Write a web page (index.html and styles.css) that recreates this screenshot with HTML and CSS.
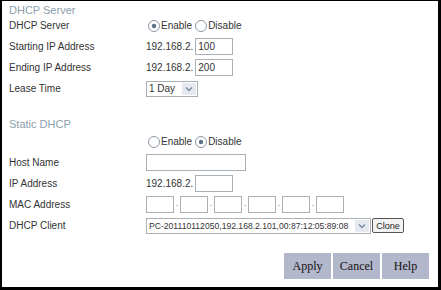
FILE: index.html
```html
<!DOCTYPE html>
<html lang="en">
  <head>
    <meta charset="UTF-8" />
    <title>DHCP Settings</title>
    <link rel="stylesheet" href="styles.css">
  </head>
  <body>
    <div class="frame">
      <h2 class="section-title">DHCP Server</h2>
      <div class="section">
        <div class="row">
          <span class="label">DHCP Server</span>
          <span class="value">
            <svg class="radio" viewBox="0 0 12 12"><circle cx="6" cy="6" r="5.5" fill="#fff" stroke="#8d99a6"/><circle cx="6" cy="6" r="2.2" fill="#5d7088"/></svg>
            <span class="opt">Enable</span>
            <svg class="radio" viewBox="0 0 12 12"><circle cx="6" cy="6" r="5.5" fill="#fff" stroke="#8d99a6"/></svg>
            <span class="opt">Disable</span>
          </span>
        </div>
        <div class="row">
          <span class="label">Starting IP Address</span>
          <span class="value"><span class="prefix">192.168.2.</span><input class="ip" type="text" value="100"></span>
        </div>
        <div class="row">
          <span class="label">Ending IP Address</span>
          <span class="value"><span class="prefix">192.168.2.</span><input class="ip" type="text" value="200"></span>
        </div>
        <div class="row">
          <span class="label">Lease Time</span>
          <span class="value">
            <span class="select lease">
              <span class="select-text">1 Day</span>
              <span class="arrow"><svg viewBox="0 0 8 6" width="8" height="6"><path d="M1 1.5 L4 4.5 L7 1.5" fill="none" stroke="#7b8aa6" stroke-width="1.5"/></svg></span>
            </span>
          </span>
        </div>
      </div>

      <h2 class="section-title static">Static DHCP</h2>
      <div class="section">
        <div class="row">
          <span class="label"></span>
          <span class="value">
            <svg class="radio" viewBox="0 0 12 12"><circle cx="6" cy="6" r="5.5" fill="#fff" stroke="#8d99a6"/></svg>
            <span class="opt">Enable</span>
            <svg class="radio" viewBox="0 0 12 12"><circle cx="6" cy="6" r="5.5" fill="#fff" stroke="#8d99a6"/><circle cx="6" cy="6" r="2.2" fill="#5d7088"/></svg>
            <span class="opt">Disable</span>
          </span>
        </div>
        <div class="row">
          <span class="label">Host Name</span>
          <span class="value"><input class="host" type="text"></span>
        </div>
        <div class="row">
          <span class="label">IP Address</span>
          <span class="value"><span class="prefix">192.168.2.</span><input class="ip" type="text"></span>
        </div>
        <div class="row">
          <span class="label">MAC Address</span>
          <span class="value mac">
            <input class="mac-part" type="text"><span class="dash">-</span>
            <input class="mac-part" type="text"><span class="dash">-</span>
            <input class="mac-part" type="text"><span class="dash">-</span>
            <input class="mac-part" type="text"><span class="dash">-</span>
            <input class="mac-part" type="text"><span class="dash">-</span>
            <input class="mac-part" type="text">
          </span>
        </div>
        <div class="row">
          <span class="label">DHCP Client</span>
          <span class="value">
            <span class="select client">
              <span class="select-text">PC-201110112050,192.168.2.101,00:87:12:05:89:08</span>
              <span class="arrow"><svg viewBox="0 0 8 6" width="8" height="6"><path d="M1 1.5 L4 4.5 L7 1.5" fill="none" stroke="#7b8aa6" stroke-width="1.5"/></svg></span>
            </span>
            <button class="clone">Clone</button>
          </span>
        </div>
      </div>

      <div class="actions">
        <button class="action">Apply</button>
        <button class="action">Cancel</button>
        <button class="action">Help</button>
      </div>
    </div>
  </body>
</html>
```

FILE: styles.css
```css
body {
  margin: 0;
  font-family: "Liberation Sans", Arial, sans-serif;
  font-size: 10px;
  color: #333;
  background-color: #fff;
}
.frame {
  width: 441px;
  height: 290px;
  box-sizing: border-box;
  border-top: 1px solid #000;
  border-left: 2px solid #000;
  border-right: 3px solid #000;
  border-bottom: 3px solid #000;
  padding: 0 9px 0 7px;
}
.section-title {
  margin: 0;
  height: 14px;
  line-height: 18px;
  font-size: 11px;
  font-weight: normal;
  color: #8b9eab;
}
.section-title.static {
  margin-top: 18px;
  height: 14px;
  line-height: 15px;
}
.row {
  display: flex;
  align-items: center;
  height: 21px;
}
.label {
  width: 137px;
  flex: none;
}
.value {
  display: flex;
  align-items: center;
}
.radio {
  width: 12px;
  height: 12px;
  margin: 0 1px 0 2px;
}
.opt {
  margin-right: 1px;
}
.prefix {
  margin-right: 2px;
}
input {
  height: 17px;
  box-sizing: border-box;
  border: 1px solid #a9b0b6;
  font-family: inherit;
  font-size: 10px;
  color: #333;
  padding: 0 2px;
  margin: 0;
}
.ip {
  width: 38px;
}
.host {
  width: 100px;
}
.mac-part {
  width: 28px;
}
.dash {
  width: 6px;
  text-align: center;
  color: #999;
  font-size: 8px;
}
.select {
  display: flex;
  align-items: center;
  height: 16px;
  box-sizing: border-box;
  border: 1px solid #a9b0b6;
  background-color: #fff;
}
.select-text {
  flex: 1;
  padding-left: 2px;
  white-space: nowrap;
  overflow: hidden;
}
.lease {
  width: 52px;
}
.client {
  width: 225px;
  font-size: 8.6px;
}
.arrow {
  display: flex;
  align-items: center;
  justify-content: center;
  width: 14px;
  height: 12px;
  margin-right: 1px;
  background-color: #e6e9f0;
}
.clone {
  height: 15px;
  width: 32px;
  margin-left: 1px;
  padding: 0;
  border: 1px solid #555;
  border-radius: 2px;
  background-color: #f2f2f2;
  font-family: inherit;
  font-size: 9px;
  color: #222;
}
.actions {
  display: flex;
  justify-content: flex-end;
  gap: 2px;
  margin-top: 17px;
}
.action {
  width: 47px;
  height: 26px;
  border: none;
  padding: 0;
  background-color: #b3b7cb;
  font-family: "Liberation Serif", "Times New Roman", serif;
  font-size: 12px;
  color: #111;
}
```
